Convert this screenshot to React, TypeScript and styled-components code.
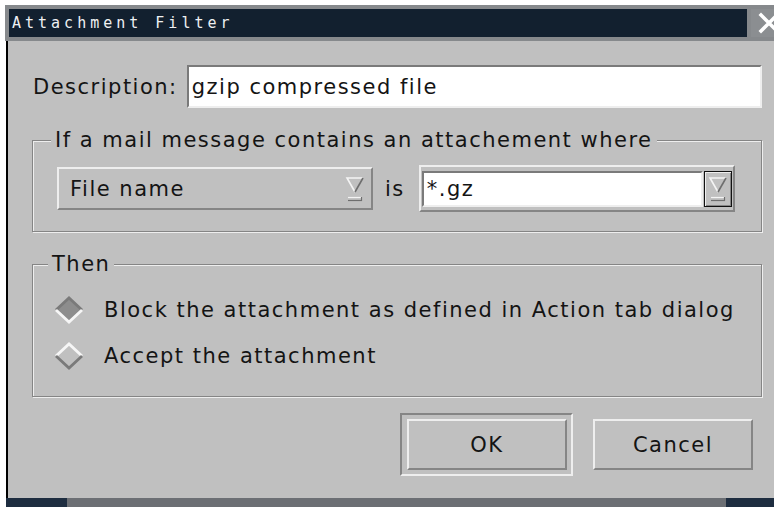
import React from 'react';
import styled, { createGlobalStyle } from 'styled-components';

const face = '#c0c0c0';
const shade = '#858585';
const hilite = '#eeeeee';
const uiFont = `"DejaVu Sans", "Liberation Sans", sans-serif`;

const GlobalStyle = createGlobalStyle`
  html, body {
    margin: 0;
    padding: 0;
    background: #ffffff;
  }
  body {
    width: 774px;
    height: 507px;
    overflow: hidden;
  }
`;

const Screen = styled.div`
  display: flex;
  flex-direction: column;
  width: 774px;
  height: 507px;
  padding-top: 5px;
  box-sizing: border-box;
  font-family: ${uiFont};
  font-size: 21px;
  letter-spacing: 1.5px;
  color: #141414;
`;

const Window = styled.div`
  flex: 1;
  min-height: 0;
  display: flex;
  flex-direction: column;
  margin-left: 5px;
`;

const TitleRow = styled.div`
  display: flex;
  height: 36px;
`;

const TitleBar = styled.div`
  flex: 1;
  display: flex;
  align-items: center;
  background: #12202f;
  border: 4px solid #86898c;
  padding-left: 3px;
  font-family: "DejaVu Sans Mono", "Liberation Mono", monospace;
  font-size: 15px;
  letter-spacing: 4px;
  color: #eef0f2;
`;

const CloseBox = styled.div`
  width: 23px;
  flex-shrink: 0;
  box-sizing: border-box;
  display: flex;
  align-items: center;
  padding-left: 7px;
  overflow: hidden;
  background: #8b8e91;
  border-top: 4px solid #86898c;
  border-bottom: 4px solid #86898c;
`;

const Body = styled.div`
  flex: 1;
  display: flex;
  flex-direction: column;
  margin-left: 1px;
  border-left: 2px solid #000;
  background: ${face};
  padding: 24px 12px 0 24px;
`;

const FieldRow = styled.div`
  display: flex;
  align-items: center;
  gap: 9px;
  height: 43px;
`;

const Label = styled.span`
  margin-left: 1px;
  white-space: nowrap;
`;

const TextField = styled.div`
  flex: 1;
  display: flex;
  align-items: center;
  align-self: stretch;
  box-sizing: border-box;
  background: #ffffff;
  border: 2px solid;
  border-color: #7a7a7a ${hilite} ${hilite} #7a7a7a;
  padding-left: 3px;
  white-space: nowrap;
`;

const Group = styled.fieldset<{ $pad: string }>`
  margin: 20px 0 0;
  padding: ${(p) => p.$pad};
  min-width: 0;
  border: 1px solid ${shade};
  box-shadow: inset 1px 1px 0 ${hilite}, 1px 1px 0 ${hilite};
`;

const Legend = styled.legend`
  padding: 0 4px;
  margin-left: -6px;
  line-height: 24px;
  background: ${face};
`;

const ComboRow = styled.div`
  display: flex;
  align-items: center;
  gap: 12px;
`;

const OptionMenu = styled.div`
  width: 316px;
  height: 43px;
  box-sizing: border-box;
  display: flex;
  align-items: center;
  justify-content: space-between;
  padding: 0 6px 0 11px;
  border: 2px solid;
  border-color: ${hilite} ${shade} ${shade} ${hilite};
`;

const IsLabel = styled.span`
  margin-right: 2px;
`;

const ComboBox = styled.div`
  width: 316px;
  height: 47px;
  box-sizing: border-box;
  display: flex;
  gap: 1px;
  padding: 4px 1px 3px 1px;
  border: 2px solid;
  border-color: ${hilite} ${shade} ${shade} ${hilite};
`;

const ArrowButton = styled.div`
  width: 28px;
  box-sizing: border-box;
  display: flex;
  align-items: center;
  justify-content: center;
  border: 1px solid #111;
  box-shadow: inset 1px 1px 0 ${hilite}, inset -1px -1px 0 ${shade};
`;

const RadioList = styled.div`
  display: flex;
  flex-direction: column;
  gap: 10px;
`;

const RadioRow = styled.div`
  display: flex;
  align-items: center;
  gap: 20px;
  height: 36px;
  white-space: nowrap;
`;

const ButtonRow = styled.div`
  display: flex;
  justify-content: flex-end;
  align-items: center;
  gap: 20px;
  margin-top: 16px;
  padding-right: 9px;
`;

const DefaultRing = styled.div`
  padding: 4px 4px 4px 5px;
  border: 2px solid;
  border-color: ${shade} ${hilite} ${hilite} ${shade};
`;

const PushButton = styled.button`
  width: 160px;
  height: 51px;
  box-sizing: border-box;
  display: flex;
  align-items: center;
  justify-content: center;
  background: ${face};
  border: 2px solid;
  border-color: ${hilite} ${shade} ${shade} ${hilite};
  font-family: ${uiFont};
  font-size: 21px;
  letter-spacing: 1.5px;
  color: #141414;
  padding: 0;
`;

const Footer = styled.div`
  display: flex;
  height: 9px;
  margin-left: 6px;
`;

const FooterSeg = styled.div<{ $w?: number; $dark?: boolean }>`
  ${(p) => (p.$w ? `width: ${p.$w}px;` : 'flex: 1;')}
  background: ${(p) => (p.$dark ? '#1e2d40' : '#6c6f74')};
`;

// Motif-style option menu glyph: shaded triangle over a bar
const MenuGlyph = () => (
  <svg width="20" height="30" viewBox="0 0 20 30">
    <polygon points="2,4 18,4 10,18" fill={face} />
    <polyline points="10,18 2,4 18,4" fill="none" stroke="#f4f4f4" strokeWidth="1.6" />
    <line x1="18" y1="4" x2="10" y2="18" stroke="#6e6e6e" strokeWidth="1.6" />
    <rect x="3" y="23" width="14" height="4" fill={face} />
    <line x1="3" y1="23.5" x2="17" y2="23.5" stroke="#f4f4f4" strokeWidth="1.2" />
    <line x1="3" y1="26.5" x2="17" y2="26.5" stroke="#6e6e6e" strokeWidth="1.2" />
    <line x1="16.5" y1="23" x2="16.5" y2="27" stroke="#6e6e6e" strokeWidth="1.2" />
  </svg>
);

const Diamond = ({ on }: { on: boolean }) => (
  <svg width="30" height="28" viewBox="0 0 30 28">
    <polygon points="15,2 28,14 15,26 2,14" fill={on ? '#8d8d8d' : face} />
    <polyline
      points="2,14 15,2 28,14"
      fill="none"
      stroke={on ? '#7a7a7a' : '#f6f6f6'}
      strokeWidth="2.8"
    />
    <polyline
      points="2,14 15,26 28,14"
      fill="none"
      stroke={on ? '#f6f6f6' : '#7a7a7a'}
      strokeWidth="2.8"
    />
  </svg>
);

const CloseMark = () => (
  <svg width="22" height="22" viewBox="0 0 22 22" style={{ flexShrink: 0 }}>
    <path d="M3 3 L19 19 M19 3 L3 19" stroke="#ffffff" strokeWidth="3.5" strokeLinecap="square" />
  </svg>
);

const App = () => (
  <>
    <GlobalStyle />
    <Screen>
      <Window>
        <TitleRow>
          <TitleBar>Attachment Filter</TitleBar>
          <CloseBox>
            <CloseMark />
          </CloseBox>
        </TitleRow>
        <Body>
          <FieldRow>
            <Label>Description:</Label>
            <TextField>gzip compressed file</TextField>
          </FieldRow>

          <Group $pad="13px 25px 19px 24px">
            <Legend>If a mail message contains an attachement where</Legend>
            <ComboRow>
              <OptionMenu>
                <span>File name</span>
                <MenuGlyph />
              </OptionMenu>
              <IsLabel>is</IsLabel>
              <ComboBox>
                <TextField>*.gz</TextField>
                <ArrowButton>
                  <MenuGlyph />
                </ArrowButton>
              </ComboBox>
            </ComboRow>
          </Group>

          <Group $pad="16px 20px 22px 21px">
            <Legend>Then</Legend>
            <RadioList>
              <RadioRow>
                <Diamond on />
                <span>Block the attachment as defined in Action tab dialog</span>
              </RadioRow>
              <RadioRow>
                <Diamond on={false} />
                <span>Accept the attachment</span>
              </RadioRow>
            </RadioList>
          </Group>

          <ButtonRow>
            <DefaultRing>
              <PushButton>OK</PushButton>
            </DefaultRing>
            <PushButton>Cancel</PushButton>
          </ButtonRow>
        </Body>
      </Window>
      <Footer>
        <FooterSeg $w={61} $dark />
        <FooterSeg />
        <FooterSeg $w={48} $dark />
      </Footer>
    </Screen>
  </>
);

export default App;
